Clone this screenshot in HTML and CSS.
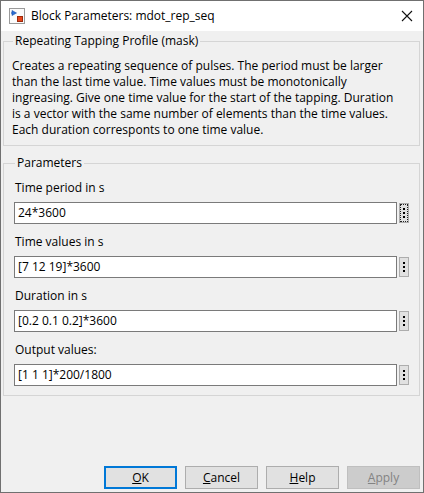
FILE: index.html
```html
<!DOCTYPE html>
<html>
<head>
<meta charset="utf-8">
<link rel="stylesheet" href="styles.css">
</head>
<body>
<div class="window">
  <div class="titlebar">
    <svg class="app-icon" width="16" height="16" viewBox="0 0 16 16">
      <rect x="0.5" y="0.5" width="15" height="15" fill="#fbfbfb" stroke="#9a9a9a"/>
      <path d="M3 2.5 L3 7.5 L7.5 5 Z" fill="#2b6fd6" stroke="#1a4fa8" stroke-width="0.6"/>
      <path d="M2 5 L3 5" stroke="#1a4fa8" stroke-width="1"/>
      <rect x="8.5" y="8.5" width="5" height="5" fill="#e8461b" stroke="#9c2a0c"/>
    </svg>
    <span class="title">Block Parameters: mdot_rep_seq</span>
    <svg class="close" width="12" height="12" viewBox="0 0 12 12">
      <path d="M1 1 L11 11 M11 1 L1 11" stroke="#111" stroke-width="1.1"/>
    </svg>
  </div>
  <div class="body">
    <fieldset class="group desc-group">
      <legend>Repeating Tapping Profile (mask)</legend>
      <p class="desc">Creates a repeating sequence of pulses. The period must be larger than the last time value. Time values must be monotonically ingreasing. Give one time value for the start of the tapping. Duration is a vector with the same number of elements than the time values. Each duration corresponts to one time value.</p>
    </fieldset>
    <fieldset class="group params">
      <legend>Parameters</legend>
      <div class="param">
        <div class="label">Time period in s</div>
        <div class="field-row">
          <div class="input">24*3600</div>
          <div class="more focused"><span class="dots"><i></i><i></i><i></i></span></div>
        </div>
      </div>
      <div class="param">
        <div class="label">Time values in s</div>
        <div class="field-row">
          <div class="input">[7 12 19]*3600</div>
          <div class="more"><span class="dots"><i></i><i></i><i></i></span></div>
        </div>
      </div>
      <div class="param">
        <div class="label">Duration in s</div>
        <div class="field-row">
          <div class="input">[0.2 0.1 0.2]*3600</div>
          <div class="more"><span class="dots"><i></i><i></i><i></i></span></div>
        </div>
      </div>
      <div class="param">
        <div class="label">Output values:</div>
        <div class="field-row">
          <div class="input">[1 1 1]*200/1800</div>
          <div class="more"><span class="dots"><i></i><i></i><i></i></span></div>
        </div>
      </div>
    </fieldset>
    <div class="spacer"></div>
    <div class="buttons">
      <div class="btn default"><u>O</u>K</div>
      <div class="btn"><u>C</u>ancel</div>
      <div class="btn"><u>H</u>elp</div>
      <div class="btn disabled"><u>A</u>pply</div>
    </div>
  </div>
</div>
</body>
</html>
```
FILE: styles.css
```css
* { box-sizing: border-box; }
html, body { margin: 0; padding: 0; }
body {
  width: 424px;
  height: 493px;
  font-family: "Segoe UI", "Open Sans", "Noto Sans", sans-serif;
  font-size: 12px;
  color: #000;
  background: #f0f0f0;
}
.window {
  width: 424px;
  height: 493px;
  border: 1px solid #707070;
  display: flex;
  flex-direction: column;
  background: #f0f0f0;
}
.titlebar {
  height: 30px;
  background: #fff;
  display: flex;
  align-items: center;
  padding-left: 8px;
  padding-right: 10px;
  flex-shrink: 0;
}
.app-icon { flex-shrink: 0; margin-right: 6px; }
.title { flex: 1; font-size: 12px; line-height: 16px; }
.close { flex-shrink: 0; }
.body {
  flex: 1;
  display: flex;
  flex-direction: column;
  padding: 2px 3px 3px 2px;
}
.group {
  margin: 0;
  border: 1px solid #d5d5d5;
  padding: 0 10px 7px 8px;
  min-width: 0;
}
.group legend {
  padding: 0 2px;
  margin-left: 1px;
  line-height: 16px;
}
.desc {
  margin: 9px 0 0 0;
  line-height: 16px;
  padding-right: 5px;
}
.params {
  margin-top: 9px;
  padding: 9px 10px 9px 10px;
  display: flex;
  flex-direction: column;
  gap: 10px;
}
.param { display: flex; flex-direction: column; gap: 6px; }
.label { line-height: 16px; padding-left: 1px; }
.field-row { display: flex; align-items: center; gap: 2px; }
.input {
  flex: 1;
  height: 22px;
  border: 1px solid #7a7a7a;
  background: #fff;
  line-height: 20px;
  padding-left: 3px;
}
.more {
  width: 10px;
  height: 20px;
  background: #e1e1e1;
  border: 1px solid #adadad;
  display: flex;
  align-items: center;
  justify-content: center;
}
.more.focused { outline: 1px dotted #222; outline-offset: -2px; }
.dots { display: flex; flex-direction: column; gap: 2px; }
.dots i { display: block; width: 2px; height: 2px; background: #000; }
.spacer { flex: 1; }
.buttons {
  display: flex;
  justify-content: flex-end;
  gap: 8px;
}
.btn {
  width: 73px;
  height: 23px;
  background: #e1e1e1;
  border: 1px solid #adadad;
  display: flex;
  align-items: center;
  justify-content: center;
  line-height: 16px;
}
.btn.default { border: 2px solid #0078d7; }
.btn.disabled { background: #cccccc; border-color: #bfbfbf; color: #838383; }
```
